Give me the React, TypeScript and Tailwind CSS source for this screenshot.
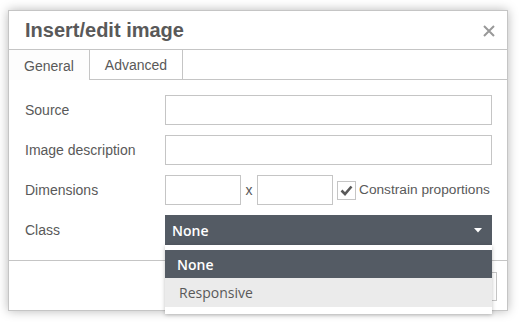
export default function App() {
  const rows = ["Source", "Image description"];
  return (
    <div className="w-[524px] h-[327px] bg-white pt-[10px] pl-[8px] relative font-['Liberation_Sans',Arial,sans-serif] text-[#595959]">
      <div className="w-[500px] h-[301px] border border-[#c5c5c5] bg-white shadow-[0_0_10px_rgba(0,0,0,0.28)] flex flex-col">
        <div className="h-[39px] shrink-0 border-b border-[#c5c5c5] flex items-center justify-between pl-[16px] pr-[12px]">
          <span className="text-[20px] font-bold leading-none text-[#595959]">Insert/edit image</span>
          <svg width="12" height="12" viewBox="0 0 12 12" className="mt-[1px]">
            <path d="M1 1 L11 11 M11 1 L1 11" stroke="#999" strokeWidth="2" />
          </svg>
        </div>
        <div className="h-[30px] shrink-0 border-b border-[#c5c5c5] flex text-[14px]">
          <div className="w-[81px] h-[30px] pt-[2px] border-r border-[#c5c5c5] bg-[#fdfdfd] flex items-center justify-center">General</div>
          <div className="w-[93px] h-[29px] pt-[2px] border-r border-[#c5c5c5] flex items-center justify-center">Advanced</div>
        </div>
        <div className="shrink-0 flex flex-col gap-[10px] pt-[15px] pb-[15px] pl-[16px] pr-[14px] text-[14px] border-b border-[#c5c5c5]">
          {rows.map((r) => (
            <div key={r} className="flex items-center h-[30px]">
              <div className="w-[140px] shrink-0">{r}</div>
              <div className="w-[327px] h-[30px] shrink-0 border border-[#c5c5c5] bg-white" />
            </div>
          ))}
          <div className="flex items-center h-[30px] whitespace-nowrap">
            <div className="w-[140px] shrink-0">Dimensions</div>
            <div className="w-[76px] h-[30px] shrink-0 border border-[#c5c5c5]" />
            <div className="w-[16px] shrink-0 text-center">x</div>
            <div className="w-[76px] h-[30px] shrink-0 border border-[#c5c5c5]" />
            <div className="ml-[4px] w-[19px] h-[19px] shrink-0 border border-[#c5c5c5] flex items-center justify-center">
              <svg width="13" height="11" viewBox="0 0 13 11">
                <path d="M1.5 5.5 L5 9 L11.5 1.5" stroke="#595959" strokeWidth="2.6" fill="none" />
              </svg>
            </div>
            <div className="ml-[3px] shrink-0 text-[13.7px]">Constrain proportions</div>
          </div>
          <div className="flex items-center h-[30px]">
            <div className="w-[140px] shrink-0">Class</div>
            <div className="w-[327px] h-[30px] shrink-0 bg-[#545b64] flex items-center justify-between pl-[7px] pr-[10px] text-white font-['Open_Sans',sans-serif] font-semibold text-[14px]">
              <span>None</span>
              <svg width="8" height="5" viewBox="0 0 8 5">
                <path d="M0 0 L8 0 L4 4.5 Z" fill="#fff" />
              </svg>
            </div>
          </div>
        </div>
        <div className="flex justify-end gap-[6px] pt-[11px] pr-[10px]">
          <div className="h-[29px] px-[12px] border border-[#c5c5c5] bg-white flex items-center text-[14px]">Ok</div>
          <div className="h-[29px] px-[12px] border border-[#c5c5c5] bg-white flex items-center text-[14px]">Cancel</div>
        </div>
      </div>
      <div className="absolute left-[165px] top-[245px] w-[327px] bg-white pt-[5px] pb-[7px] shadow-[0_1px_4px_rgba(0,0,0,0.25)] font-['Open_Sans',sans-serif] text-[14px]">
        <div className="h-[28px] bg-[#545b64] text-white font-semibold flex items-center pl-[12px]">None</div>
        <div className="h-[29px] bg-[#ebebeb] text-[#595959] flex items-center pl-[14px]">Responsive</div>
      </div>
    </div>
  );
}
